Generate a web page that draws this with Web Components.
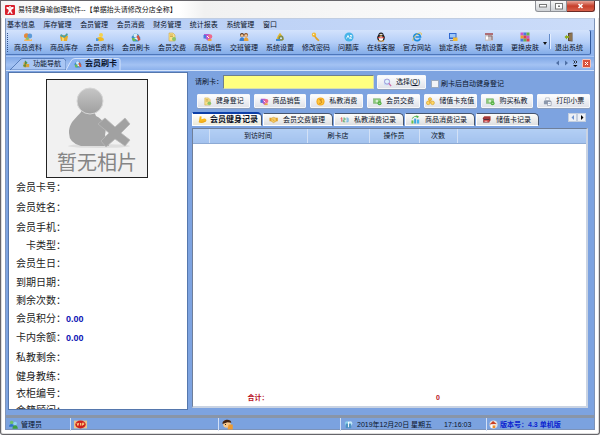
<!DOCTYPE html>
<html lang="zh-CN">
<head>
<meta charset="utf-8">
<title>易特健身瑜伽理软件</title>
<style>
html,body{margin:0;height:100%}
body{font:7px/10px "Liberation Sans","Noto Sans CJK SC",sans-serif;color:#0a1228;background:#fff;overflow:hidden}
</style>
</head>
<body>
<gym-app></gym-app>
<script>
const ICONS={
logo:'<rect width="10" height="10" rx="1" fill="#d8202c"/><path d="M1.5 2h2l1.5 1.6L6.500 2h2v1.400L6.400 4.800v1.400l1.400 2.500H6.200L5 6.800 3.800 8.700H2.200l1.400-2.500V4.800L1.500 3.400z" fill="#fff"/><circle cx="5" cy="2" r="1" fill="#fff"/>',
goods:'<circle cx="3.600" cy="3.800" r="2.600" fill="#e58a3a"/><circle cx="6.800" cy="4" r="2.400" fill="#5b9ad8"/><path d="M1 9c0-3 5-4 6-1l2-1v2z" fill="#f2b65c"/><circle cx="4.500" cy="6.600" r="1.500" fill="#8cc06a"/>',
stock:'<path d="M1 4l4-1 4 1-1 5H2z" fill="#e8ac2c"/><path d="M2 2l3 2 3-3 1 2-4 3-4-2z" fill="#4ba0a0"/><path d="M3 5l2 1v3H3z" fill="#f6d76c"/>',
member:'<circle cx="6" cy="3" r="2" fill="#f5d24c"/><path d="M1 8c0-4 8-4 8 0 0 1.500-8 1.500-8 0z" fill="#f2bb22"/><path d="M1 6l3 1-1 2H1z" fill="#4b9ae4"/>',
card:'<path d="M.5 5l3-3.500 3.500.500 2.500 4-2 3.500H2z" fill="#3c8fc4"/><circle cx="4.500" cy="3.500" r="2" fill="#d5ebf7"/><path d="M5.500 4l2-1 2 5-2.500 1z" fill="#d9533f"/><path d="M.8 6h3l1 3H2z" fill="#6cbc4c"/><path d="M3 6l3-.5 1 3z" fill="#f3f6fa"/>',
fee:'<path d="M2 1h4l2 2v6H2z" fill="#f7e08c" stroke="#c99c30" stroke-width=".5"/><path d="M3 3h3M3 4.500h3" stroke="#b58a2a" stroke-width=".6"/><circle cx="7" cy="7" r="2" fill="#8bc46a"/>',
sell:'<path d="M1 2h5l3 3-4 4-4-4z" fill="#b65ad0"/><path d="M.5 3H3v3.500H.5z" fill="#4a78dc"/><circle cx="7" cy="4.500" r="2.300" fill="#ee6a8c"/><path d="M5 7h3.500v2H5z" fill="#f2a444"/><path d="M4 4l2 2" stroke="#fff"/>',
people:'<circle cx="3" cy="3" r="2" fill="#573216"/><circle cx="3" cy="3.600" r="1.400" fill="#f7c795"/><circle cx="7" cy="3" r="2" fill="#8b4e20"/><circle cx="7" cy="3.600" r="1.400" fill="#f7c795"/><path d="M.5 9c0-5 5-5 5 0z" fill="#3b7fd0"/><path d="M4.800 9c0-5 4.700-5 4.700 0z" fill="#e7a034"/>',
gear:'<path d="M5 .8l2 2.700 2 4.500H1l2-4.500z" fill="#e2b72d"/><circle cx="6" cy="6.200" r="2.600" fill="#7c8c50"/><circle cx="6" cy="6.200" r="1" fill="#d9ecff"/><path d="M1 7h4v2H1z" fill="#458bd0"/>',
key:'<circle cx="3" cy="2.800" r="2.200" fill="#f0b936"/><circle cx="2.600" cy="2.400" r=".7" fill="#fff3c9"/><path d="M4 3.500l4.500 4.700-1 1-1-.3-.2-1-1-.2L3 4.600z" fill="#e0a32b"/>',
ask:'<circle cx="5" cy="5" r="4.600" fill="#47b4e8"/><path d="M2.500 6.500l1.500-3 1.500 3M6 3.500h1.600L6.300 6.400h1.500" stroke="#fff" stroke-width=".9" fill="none"/>',
qq:'<ellipse cx="5" cy="5.800" rx="3.800" ry="3.600" fill="#1a1a1e"/><circle cx="5" cy="3" r="2.600" fill="#1a1a1e"/><ellipse cx="5" cy="6.600" rx="2.300" ry="2.400" fill="#fff"/><circle cx="4.200" cy="2.500" r=".7" fill="#fff"/><circle cx="5.800" cy="2.500" r=".7" fill="#fff"/><path d="M3.300 3.600h3.400L5 4.500z" fill="#f2a62a"/><path d="M2 4.700q3 1.500 6 0v1q-3 1.300-6 0z" fill="#e1332a"/><path d="M2 9h2.500M5.500 9H8" stroke="#f2a62a"/>',
ie:'<path d="M8.300 6.500A3.400 3.400 0 1 1 8.500 5H3.500" fill="none" stroke="#1c8cdd" stroke-width="1.700"/><path d="M1.200 9C-1 7 7-1 9.300 1.200c.5.600.2 1.400-.2 2" fill="none" stroke="#f2c233" stroke-width=".8"/>',
lock:'<rect x="1" y="1" width="7.500" height="6" fill="#3168cf"/><rect x="2" y="2" width="5.500" height="3.500" fill="#9cc7fa"/><path d="M2 8.500h5" stroke="#7a86a0"/><rect x="5" y="5.500" width="4.500" height="3.500" fill="#f0ba36"/>',
nav:'<rect x="1" y="1" width="8" height="8" fill="#c8c4c8"/><path d="M1 2h8" stroke="#a6505a" stroke-width="1.500"/><path d="M4 4h4v4" fill="none" stroke="#8c6c6c"/><rect x="2" y="4.500" width="2" height="3" fill="#fff"/>',
skin:'<path d="M.5.500h3v3h-3zM6.500 3.500h3v3h-3z" fill="#ce54c8"/><path d="M3.500.500h3v3h-3zM.5 6.500h3v3h-3z" fill="#4b78dc"/><path d="M6.500.500h3v3h-3zM3.500 6.500h3v3h-3z" fill="#6ab04a"/><path d="M.5 3.500h3v3h-3z" fill="#e9a02f"/><path d="M3.500 3.500h3v3h-3zM6.500 6.500h3v3h-3z" fill="#dc4444"/>',
exit:'<path d="M4 1l4.500-.5v9L4 9z" fill="#5d4b36"/><path d="M5 2l3-1v8L5 8z" fill="#8d7350"/><path d="M.5 5L3 2.700v1.400h2v2H3v1.400z" fill="#8cab1c"/>',
guide:'<path d="M2 3h3v6H2z" fill="#e2a93a"/><path d="M4 .5l3 3-3 3z" fill="#4f9c48"/><path d="M4 5h5v4H4z" fill="#d8a33d"/><circle cx="3" cy="7" r="1.500" fill="#6c9e3a"/><path d="M4 1v8" stroke="#3d6a3a" stroke-width=".7"/>',
find:'<rect x="1" y="1" width="6.500" height="7" rx="1" fill="#c9e0f7"/><circle cx="4.500" cy="4" r="2.800" fill="#dff2fd" stroke="#9486d0" stroke-width=".9"/><path d="M6.500 6L9 9" stroke="#d06aa6" stroke-width="1.500"/>',
coin:'<circle cx="5" cy="5" r="4.500" fill="#f5a81c"/><circle cx="5" cy="5" r="3.300" fill="#ffc740"/><path d="M3.700 3h2.500L5 4.500c2 0 1.700 2.500-.1 2.500H3.600" fill="none" stroke="#b76a08" stroke-width=".8"/>',
cash:'<rect x=".5" y="2" width="8" height="5" fill="#8cc87c" stroke="#67a65c" stroke-width=".5"/><circle cx="4.300" cy="4.500" r="1.500" fill="#d6efcf"/><circle cx="7.300" cy="7" r="2.200" fill="#4eaf3c"/><path d="M6.300 7h2" stroke="#fff" stroke-width=".7"/>',
money:'<circle cx="4.500" cy="2.500" r="1.800" fill="#ffd767" stroke="#d59c1c" stroke-width=".7"/><circle cx="2.500" cy="6.500" r="2" fill="#ffd767" stroke="#d59c1c" stroke-width=".7"/><circle cx="7.300" cy="6.500" r="2" fill="#ffd767" stroke="#d59c1c" stroke-width=".7"/><path d="M4.500 2v5" stroke="#e3a41e"/>',
print:'<path d="M3 1h4v3H3z" fill="#fff" stroke="#7c879a" stroke-width=".5"/><rect x="1" y="4" width="8" height="4" rx=".5" fill="#8c98ac"/><path d="M5 5h4v4.500H5z" fill="#fff" stroke="#59657a" stroke-width=".5"/><path d="M6 7h2" stroke="#4878c0" stroke-width=".6"/>',
arm:'<path d="M2 1.500l2 .2-.3 3L6 4.300c2-1 3.500.2 3.300 2.200C8 9 3 9.500.8 8z" fill="#f9b91c"/><path d="M1 7.500c2 1 5 .5 8-1" stroke="#e08f12" stroke-width=".6" fill="none"/>',
hand:'<path d="M.5 3h2v4h-2zM7.800 3h2v4h-2z" fill="#e5a22b"/><path d="M2.500 3.500L5 2.500l3 1V7L5 8.500 2.500 7z" fill="#f7cc61" stroke="#c88a22" stroke-width=".5"/><path d="M4 5l2 1.500" stroke="#b87a1a" stroke-width=".6"/>',
nums:'<path d="M.7 4L2 3v4.500" stroke="#e04848" fill="none"/><path d="M3.600 3.500h2v2h-2v2h2.200" stroke="#4aa45a" fill="none" stroke-width=".9"/><path d="M7 3.500h2v4H7m0-2h2" stroke="#55a8dd" fill="none" stroke-width=".9"/>',
chart:'<path d="M.5 6h2.200v3.500H.5z" fill="#6ac048"/><path d="M3.500 4h2.200v5.500H3.500z" fill="#3aa6dc"/><path d="M6.500 5h2.600v4.500H6.500z" fill="#48b4e8"/><path d="M1 4q3-3.500 6-2.500" stroke="#4ab24a" fill="none"/><path d="M6 .3l3 1.700-2.500 1.500z" fill="#4ab24a"/>',
cards:'<path d="M.5 4l2-2.500H9.500v4.500l-1.500 1z" fill="#a63a38"/><rect x="1.500" y="3.500" width="6.500" height="4.500" fill="#cf4846" stroke="#6b2b33" stroke-width=".5"/><path d="M2 5h6" stroke="#4b2b3b"/><path d="M3 7h3" stroke="#fff" stroke-width=".7"/>',
users:'<circle cx="3" cy="2.800" r="2" fill="#6dc06a"/><path d="M0 7.500c0-4 5.500-4 5.500 0z" fill="#2d76c8"/><circle cx="6.800" cy="4" r="2" fill="#8fd4ee"/><path d="M3.800 9.700c0-5 6-5 6 0z" fill="#3f9e40"/>',
vip:'<path d="M0 2h10v6H0z" fill="#e9c58b"/><ellipse cx="5" cy="5" rx="4" ry="3" fill="#cf201c"/><path d="M2.300 3.800l.7 2 .7-2M5 3.800v2M6.300 6V4h1.200v1H6.300" stroke="#ffdc83" stroke-width=".7" fill="none"/>',
face:'<circle cx="4.500" cy="4.500" r="3.500" fill="#f7c78c"/><path d="M.5 4.500C0 0 8.500-.5 8.500 3.500L5 3z" fill="#442211"/><circle cx="3.200" cy="5" r=".5"/><path d="M6 5h3.800v4.500H5z" fill="#ee9a31"/>',
clock:'<circle cx="3.500" cy="4" r="2.500" fill="#8fd5ee"/><circle cx="6.800" cy="4" r="2.500" fill="#c5e9f7"/><path d="M2 4h6v5H2z" fill="#4e93c2"/><path d="M5 2v6" stroke="#fff"/>',
home:'<circle cx="5" cy="5" r="4.500" fill="#e6e3df"/><path d="M.5 5l4-4 4 3.500" fill="#c93d20"/><path d="M2 5h5v4H2z" fill="#fff"/><path d="M4 6h3v3H4z" fill="#ed8c28"/>'
};
const css=s=>'<style>:host{box-sizing:border-box}*{box-sizing:border-box}button{font:inherit;color:inherit;margin:0;padding:0;border:0;background:none;white-space:nowrap}'+s+'</style>';
function define(tag,html){
  customElements.define(tag,class extends HTMLElement{
    connectedCallback(){
      if(this.shadowRoot)return;
      this.attachShadow({mode:'open'}).innerHTML=typeof html==='function'?html(this):html;
    }
  });
}
const ic=(n,s)=>`<ui-icon name="${n}" style="--s:${s||9}px"></ui-icon>`;

define('ui-icon',e=>css(':host{display:block;flex:none;width:var(--s,9px);height:var(--s,9px)}svg{display:block;width:100%;height:100%}')+`<svg viewBox="0 0 10 10" aria-hidden="true">${ICONS[e.getAttribute('name')]}</svg>`);

define('title-bar',css(`
:host{display:flex;height:18px;flex:none;padding-left:4px;background:linear-gradient(90deg,#f4f4f4,#fff 12%,#fff 30%,#f1f1f1 34%,#f7f7f7 60%,#fff);border-top:1px solid #66656a}
.name{display:flex;align-items:center;gap:3px;flex:1;color:#111}
.win{display:flex;align-items:flex-start;margin-right:4px}
.win button{display:grid;place-items:center;width:16px;height:11px;border:1px solid #8d9096;border-top:0;background:linear-gradient(#f7f7f7,#cfd2d6)}
.win button+button{border-left:0}
.win button:first-child{border-bottom-left-radius:3px}
.win .x{width:28px;background:linear-gradient(#e9a598,#c63f2b 50%,#d8604a);border-color:#6d2a24;border-bottom-right-radius:3px}
svg{display:block}`)+`
<div class="name">${ic('logo',10)}<span>易特健身瑜伽理软件--【单据抬头请修改分店全称】</span></div>
<div class="win"><button aria-label="最小化"><svg width="8" height="4"><rect x=".5" y=".5" width="7" height="2.500" fill="#fff" stroke="#777"/></svg></button><button aria-label="最大化"><svg width="8" height="7"><rect x=".5" y=".5" width="7" height="5.500" fill="#fff" stroke="#777"/><rect x="3" y="2.500" width="2" height="1.500" fill="#777"/></svg></button><button class="x" aria-label="关闭"><svg width="7" height="6"><path d="M1.500 1l4 4M5.500 1l-4 4" stroke="#fff" stroke-width="1.600"/></svg></button></div>`);

define('menu-bar',css(`
:host{display:block;flex:none;height:11px;background:linear-gradient(90deg,#b4cbf4,#cbdcf9);padding-left:1px}
nav{display:flex;justify-content:space-between;align-items:center;width:46%;height:11px}`)+
'<nav>'+['基本信息','库存管理','会员管理','会员消费','财务管理','统计报表','系统管理','窗口'].map(t=>`<button>${t}</button>`).join('')+'</nav>');

define('tool-item',e=>css(`:host{display:block;flex:none}button{display:flex;flex-direction:column;align-items:center;gap:1px}`)+`<button>${ic(e.getAttribute('icon'),10)}<span><slot></slot></span></button>`);

define('tool-bar',css(`
:host{display:block;flex:none;height:26px;background:#8fb4ee}
.bar{display:flex;height:25px;gap:8px;padding:2px 0 0 1px;align-items:flex-start;margin-right:3px;background:linear-gradient(#d3e2fc,#b5cff8 50%,#84ade9);border-right:1px solid #33599b;border-bottom:1px solid #4d76ba;border-radius:0 2px 2px 0}
.grip{width:1px;height:19px;margin:1px -2px 0 0;border-left:1px dotted #31548e}
.drop{align-self:center;margin:0 -4px;border:2px solid transparent;border-top:3px solid #111;border-bottom:0}
.sep{width:1px;height:15px;margin:2px -3px 0 -2px;background:#638ac8;box-shadow:1px 0 #e4eeff}
`)+'<div class="bar"><i class="grip"></i>'+[['goods','商品资料'],['stock','商品库存'],['member','会员资料'],['card','会员刷卡'],['fee','会员交费'],['sell','商品销售'],['people','交班管理'],['gear','系统设置'],['key','修改密码'],['ask','问题库'],['qq','在线客服'],['ie','官方网站'],['lock','锁定系统'],['nav','导航设置'],['skin','更换皮肤']].map(a=>`<tool-item icon="${a[0]}">${a[1]}</tool-item>`).join('')+'<i class="drop"></i><i class="sep"></i><tool-item icon="exit">退出系统</tool-item></div>');

define('doc-tabs',css(`
:host{display:flex;flex:none;height:15px;align-items:flex-end;padding-left:3px;background:linear-gradient(#7fa7e6,#a3c2f3 60%,#8cb1ec);border-top:1px solid #a9c6f5;border-bottom:1px solid #d5e4fb}
button{position:relative;display:flex;align-items:center;height:12px;padding-left:13px;gap:3px}
button svg{position:absolute;inset:0;width:100%;height:100%}
ui-icon,span{position:relative}
button+button{padding-left:8px;font-size:8px;font-weight:bold}
.a{width:57px}.b{width:55px}
.nav{display:flex;align-items:center;gap:4px;margin:0 3px 1px auto;height:12px}
.nav .x{display:grid;place-items:center;width:9px;height:9px;padding:0;background:#d9503c;border:1px solid #f2c5bd;border-radius:1px}`)+`
<button class="a">
<svg viewBox="0 0 57 12" preserveAspectRatio="none"><path d="M1 12L11 2Q12 .5 14 .5H55L57 3V12z" fill="#a9c6f4" stroke="#486fae" stroke-width=".8"/></svg>${ic('guide',8)}<span>功能导航</span></button>
<button class="b" aria-current="page"><svg viewBox="0 0 55 12" preserveAspectRatio="none"><path d="M0 12L5 3Q6 .5 9 .5H52Q54 .5 54 2V12" fill="#8db3f0" stroke="#e4eefd" stroke-width=".8"/></svg>${ic('card',8)}<span>会员刷卡</span></button>
<div class="nav"><svg width="14" height="6"><path d="M4 .5v5L1 3z" fill="#4f70a5"/><path d="M10 .5v5l3-2.500z" fill="#4f70a5"/></svg><svg width="5" height="7"><path d="M.5.500L2 2 .5 3.500M2.500.500L4 2 2.500 3.500" stroke="#111" fill="none" stroke-width=".8"/><path d="M0 5h4.500L2.200 7z"/></svg><button class="x" aria-label="关闭标签"><svg viewBox="0 0 7 7"><path d="M2 2l3 3M5 2L2 5" stroke="#fff"/></svg></button></div>`);

define('info-row',e=>css(`
:host{display:flex;align-items:center;height:20px;flex:none;font-size:10px;line-height:14px;color:#222}
:host([size=mid]){height:18px}:host([size=low]){height:16px}
dt{width:50px;text-align:right;margin:0;white-space:nowrap}
dd{margin:0;font-size:9px;font-weight:bold;color:#0d12b4}`)+`<dt>${e.getAttribute('label')}：</dt><dd><slot></slot></dd>`);

define('member-card',css(`
:host{display:block;width:180px;flex:none;background:#fff;border:1px solid #5577ad;overflow:hidden;height:100%}
figure{margin:6px 0 0 37px;width:102px;height:99px;border:1px solid #222;background:#f1f1f1;display:flex;flex-direction:column;align-items:center}
figure svg{flex:none;display:block;margin:6px 0 0 6px}
figcaption{font-size:20px;line-height:24px;color:#858585;font-family:"Noto Sans CJK SC",sans-serif}
dl{margin:0;padding-left:7px}`)+`
<figure><svg width="64" height="64" viewBox="0 0 64 64" role="img" aria-label="会员照片"><defs><linearGradient id="g" x2="0" y2="1"><stop stop-color="#c6c6c6"/><stop offset="1" stop-color="#9f9f9f"/></linearGradient></defs><ellipse cx="31" cy="60" rx="31" ry="2" fill="#dedede"/><path d="M14 24C12 30 1 34 1 47q0 10 12 13h28l-4-11q3-13-9-19-2-3-1-6z" fill="#a4a4a4"/><circle cx="22" cy="15" r="13" fill="url(#g)" stroke="#d6d6d6"/><path d="M30 38l7-6 10 9 10-9 5 6-9 9 9 7-5 6-10-7-9 8-5-6 8-8z" fill="#a1a1a1" stroke="#b8b8b8" stroke-width=".8"/></svg><figcaption>暂无相片</figcaption></figure>
<dl>`+[['会员卡号'],['会员姓名'],['会员手机'],['卡类型','low'],['会员生日'],['到期日期','mid'],['剩余次数','mid'],['会员积分','mid','0.00'],['卡内余额','','0.00'],['私教剩余'],['健身教练','mid'],['衣柜编号','low'],['会籍顾问','mid']].map(r=>`<info-row label="${r[0]}" size="${r[1]||'tall'}">${r[2]||''}</info-row>`).join('')+'</dl>');

define('action-button',e=>css(`
:host{display:block;min-width:0}
button{display:flex;align-items:center;justify-content:center;gap:4px;width:100%;height:14px;border:1px solid #f7f8fa;border-radius:1px;background:linear-gradient(#fdfdfe,#e0e3ea);box-shadow:0 1px #8d9fbd}`)+`<button>${ic(e.getAttribute('icon'),9)}<span><slot></slot></span></button>`);

define('swipe-form',css(`
:host{display:block;flex:none;padding:3px 0 0 3px}
.search{display:flex;align-items:center;height:14px}
.search label{white-space:nowrap}
#card{width:151px;height:14px;margin:0 3px 0 0;padding:0 2px;border:1px solid #d8dfae;border-top-color:#6e7f8c;border-left-color:#6e7f8c;background:#ffff80;font:inherit;outline:0;border-radius:0}
action-button.pick{width:49px}
.auto{display:flex;align-items:center;gap:2px;margin:3px 0 0 5px}
input[type=checkbox]{appearance:none;width:8px;height:8px;margin:0;border:1px solid #9aa9bf;background:#f2f4f7}
.acts{display:grid;grid-template-columns:repeat(7,1fr);gap:4px;margin:5px -2px 0 2px}`)+`
<div class="search"><label for="card">请刷卡：</label><input id="card" type="text"><action-button class="pick" icon="find">选择(<u>Q</u>)</action-button><label class="auto"><input type="checkbox"><span>刷卡后自动健身登记</span></label></div>
<div class="acts">`+[['fee','健身登记'],['sell','商品销售'],['coin','私教消费'],['cash','会员交费'],['money','储值卡充值'],['cash','购买私教'],['print','打印小票']].map(a=>`<action-button icon="${a[0]}">${a[1]}</action-button>`).join('')+'</div>');

define('record-tabs',css(`
:host{display:flex;flex:none;align-items:flex-end;height:14px;margin-top:4px}
button[role=tab]{display:flex;align-items:center;gap:5px;height:13px;width:70px;margin-right:1px;padding-left:5px;background:linear-gradient(#fdfdfb,#dedfe0);border:1px solid #46556f;border-bottom-color:#fff;border-left-color:#fff;border-radius:1px 5px 0 0}
button[aria-selected=true]{height:14px;font-size:8px;font-weight:bold;border-top:2px solid #0c3fa8;gap:3px;background:linear-gradient(#fff,#ece9d8)}
button.s[role=tab]{width:63px}
.nav{display:flex;margin:0 2px 4px auto}
.nav button{display:grid;place-items:center;width:9px;height:9px;background:#eef1f6;border:1px solid #c4cfe0}`)+
[['arm','会员健身记录'],['hand','会员交费管理'],['nums','私教消费记录'],['chart','商品消费记录'],['cards','储值卡记录']].map((t,i)=>`<button role="tab" aria-selected="${i===0}"${i===4?' class="s"':''}>${ic(t[0],9)}<span>${t[1]}</span></button>`).join('')+
`<div class="nav"><button aria-label="向左"><svg width="4" height="5"><path d="M3 0v5L.5 2.500z" fill="#6f94cf"/></svg></button><button aria-label="向右"><svg width="4" height="5"><path d="M1 0v5l2.500-2.500z"/></svg></button></div>`);

define('record-table',css(`
:host{display:flex;flex:1;min-height:0;margin:2px 0;background:#fff;border:1px solid #6f7f9a;border-right:2px solid #c9d3e3;border-bottom:2px solid #c9d3e3}
table{width:100%;height:100%;border-collapse:collapse;table-layout:fixed}
th{padding:0;height:14px;font-weight:normal;background:linear-gradient(#b3cff5,#a3c2ee);border-right:1px solid #d3e1f6;border-bottom:1px solid #8daad4}
thead th:last-child{border-right:0}
td{padding:0}
tfoot td{height:16px;color:#b80f1c;text-align:center;font-weight:bold;vertical-align:middle}`)+`
<table><colgroup><col style="width:16px"><col style="width:98px"><col style="width:62px"><col style="width:50px"><col style="width:38px"><col></colgroup>
<thead><tr><th></th><th>到访时间</th><th>刷卡店</th><th>操作员</th><th>次数</th><th></th></tr></thead>
<tbody><tr><td colspan="6"></td></tr></tbody>
<tfoot><tr><td></td><td>合计：</td><td></td><td></td><td>0</td><td></td></tr></tfoot></table>`);

define('status-bar',css(`
:host{display:grid;grid-template-columns:64px 148px 122px 146px 1fr;flex:none;height:14px;background:#7ba2df;border-top:3px solid #8995a8}
div{display:flex;align-items:center;gap:3px;padding-left:3px;white-space:nowrap}
div+div{border-left:1px solid #d3e0f6}
time{margin-right:8px}
.date{gap:4px}
.ver{gap:2px;padding-left:2px;color:#0a23cf;font-weight:bold}`)+`
<div>${ic('users',9)}<span>管理员</span></div><div>${ic('vip',13)}</div><div>${ic('face',11)}</div><div class="date">${ic('clock',9)}<time>2019年12月20日 星期五</time><time>17:16:03</time></div><div class="ver">${ic('home',9)}<span>版本号：4.3 单机版</span></div>`);

define('gym-app',css(`
:host{display:flex;flex-direction:column;height:100vh;border:1px solid #66656a;border-top:0;box-shadow:inset 0 0 0 1px #ddd;border-radius:0 0 3px 3px}
.client{display:flex;flex-direction:column;flex:1;min-height:0;margin:0 4px 4px;border:1px solid #7d93b8;border-top-color:#c0cde2}
main{display:flex;flex:1;min-height:0;gap:4px;padding:1px 6px 5px 2px;background:#7da3e0}
section{display:flex;flex-direction:column;flex:1;min-width:0}`)+`
<title-bar></title-bar><div class="client"><menu-bar></menu-bar><tool-bar></tool-bar><doc-tabs></doc-tabs><main><member-card></member-card><section><swipe-form></swipe-form><record-tabs></record-tabs><record-table></record-table></section></main><status-bar></status-bar></div>`);
</script>
</body>
</html>
